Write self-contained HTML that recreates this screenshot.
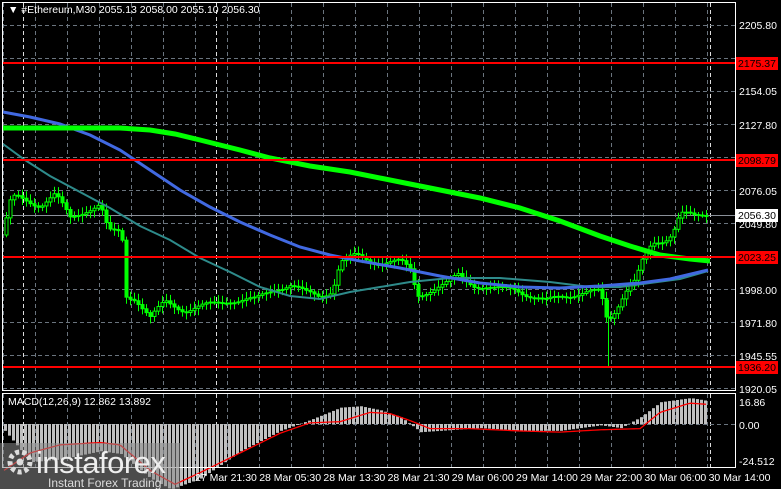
<!DOCTYPE html><html><head><style>
body{margin:0;background:#000;width:781px;height:489px;overflow:hidden;font-family:"Liberation Sans",sans-serif}
svg{position:absolute;left:0;top:0}
</style></head><body>
<svg id="s" width="781" height="489" xmlns="http://www.w3.org/2000/svg" font-family="Liberation Sans, sans-serif" font-size="10">
<rect width="781" height="489" fill="#000"/>
<g id="grid"></g>
<g id="cand"></g>
<g id="macd"></g>
<polyline fill="none" stroke="#2e8b8b" stroke-width="2" points="3,144 25,160 50,176 80,192 110,208 140,226 170,240 200,258 230,272 260,287 290,296 320,299 350,292 380,287 410,282 450,278 500,278 550,282 590,287 620,287 650,283 680,279 708,271"/>
<polyline fill="none" stroke="#4169e1" stroke-width="3" points="3,112 30,117 60,124 90,135 120,150 150,170 180,190 210,207 240,222 270,235 300,247 330,255 360,261 400,268 440,276 480,283 520,287 560,288 600,286 640,283 670,279 708,270"/>
<polyline fill="none" stroke="#00ff00" stroke-width="5" points="3,128 60,128 120,128 150,130 175,134 200,140 240,150 270,158 310,166 350,172 400,182 440,190 480,198 520,208 560,221 600,236 630,246 660,255 690,259 710,261"/>
<g id="reds"></g>
<rect x="2.5" y="2.5" width="733" height="388" fill="none" stroke="#fff"/>
<rect x="2.5" y="393.5" width="733" height="74" fill="none" stroke="#fff"/>
<text x="8" y="13" fill="#fff" font-size="10.5">▼ #Ethereum,M30  2055.13 2058.00 2055.10 2056.30</text>
<text x="8" y="405" fill="#fff" font-size="10.5">MACD(12,26,9) 12.862 13.892</text>
<g id="lbl" fill="#fff" font-size="10.5"></g>
<rect x="0" y="443" width="180" height="46" fill="#888" opacity="0.55"/>
<circle cx="20" cy="462" r="10" fill="none" stroke="#ddd" stroke-width="5" stroke-dasharray="4 3"/>
<circle cx="20" cy="462" r="3.5" fill="#ddd"/>
<text x="36" y="473" fill="#eee" font-size="31" letter-spacing="-0.5">instaforex</text>
<text x="48" y="487" fill="#ddd" font-size="12">Instant Forex Trading</text>
</svg>
<script>
const NS="http://www.w3.org/2000/svg";
function el(p,t,a,txt){const e=document.createElementNS(NS,t);for(const k in a)e.setAttribute(k,a[k]);if(txt)e.textContent=txt;document.getElementById(p).appendChild(e);return e;}
for(let x=3;x<735;x+=32){el('grid','line',{x1:x+.5,y1:3,x2:x+.5,y2:390,stroke:'#6a747e','stroke-dasharray':'4 3'});el('grid','line',{x1:x+.5,y1:394,x2:x+.5,y2:467,stroke:'#6a747e','stroke-dasharray':'4 3'});}
[23,216,710].forEach(x=>{el('grid','line',{x1:x+.5,y1:3,x2:x+.5,y2:390,stroke:'#ddd','stroke-dasharray':'4 3'});el('grid','line',{x1:x+.5,y1:394,x2:x+.5,y2:467,stroke:'#ddd','stroke-dasharray':'4 3'});});
for(let y=25;y<391;y+=33){el('grid','line',{x1:3,y1:y+.5,x2:735,y2:y+.5,stroke:'#6a747e','stroke-dasharray':'4 3'});}
el('grid','line',{x1:3,y1:424.5,x2:735,y2:424.5,stroke:'#6a747e','stroke-dasharray':'4 3'});
el('grid','line',{x1:3,y1:215.5,x2:735,y2:215.5,stroke:'#8a9099'});
const P=[[4,235],[8,205],[15,197],[25,200],[40,205],[55,195],[70,218],[85,210],[100,205],[108,232],[118,232],[122,240],[124,295],[135,298],[150,318],[165,302],[185,310],[205,306],[230,300],[255,300],[275,288],[290,285],[305,293],[320,296],[332,290],[340,262],[355,256],[375,262],[400,262],[410,270],[417,295],[430,290],[445,285],[458,275],[475,285],[495,290],[515,288],[530,296],[545,302],[560,296],[580,293],[600,292],[607,322],[615,310],[625,290],[635,280],[642,262],[652,245],[664,240],[672,232],[680,212],[686,214],[695,218],[706,216]];
function f(x){for(let i=1;i<P.length;i++){if(x<=P[i][0]){const a=P[i-1],b=P[i];return a[1]+(b[1]-a[1])*(x-a[0])/(b[0]-a[0]);}}return P[P.length-1][1];}
let prev=f(4);
for(let x=6;x<=706;x+=4){let c=f(x)+Math.sin(x*1.7)*3;let o=prev;let hi=Math.min(o,c)-2-Math.abs(Math.sin(x*0.9))*5,lo=Math.max(o,c)+2+Math.abs(Math.cos(x*1.3))*5;
el('cand','line',{x1:x+.5,y1:hi,x2:x+.5,y2:lo,stroke:'#00ff00'});
const up=c<o;el('cand','rect',{x:x-1,y:Math.min(o,c),width:3,height:Math.max(1,Math.abs(o-c)),fill:up?'#000':'#00ff00',stroke:'#00ff00','stroke-width':1});prev=c;}
el('cand','line',{x1:608.5,y1:300,x2:608.5,y2:366,stroke:'#00ff00'});
[[63,'2175.37'],[160,'2098.79'],[257,'2023.25'],[367,'1936.20']].forEach(([y,t])=>{el('reds','line',{x1:3,y1:y,x2:736,y2:y,stroke:'#ff0000','stroke-width':2});el('reds','rect',{x:736,y:y-6,width:42,height:13,fill:'#ff0000'});el('reds','text',{x:738,y:y+4,fill:'#000','font-size':10.5},t);});
[[25,'2205.80'],[91,'2154.05'],[125,'2127.80'],[191,'2076.05'],[224,'2049.80'],[290,'1998.00'],[323,'1971.80'],[356,'1945.55'],[389,'1920.05'],[402,'16.86'],[425,'0.00'],[461,'-24.512']].forEach(([y,t])=>el('lbl','text',{x:739,y:y+4},t));
el('lbl','rect',{x:736,y:209,width:42,height:13,fill:'#fff'});el('lbl','text',{x:738,y:219,fill:'#000'},'2056.30');
['27 Mar 21:30','28 Mar 05:30','28 Mar 13:30','28 Mar 21:30','29 Mar 06:00','29 Mar 14:00','29 Mar 22:00','30 Mar 06:00','30 Mar 14:00'].forEach((t,i)=>el('lbl','text',{x:195+i*64.2,y:481},t));
const M=[[4,-5],[30,-28],[60,-26],[100,-20],[120,-22],[150,-40],[170,-48],[200,-40],[240,-20],[280,-5],[310,3],[340,12],[360,13],[380,10],[400,5],[420,-6],[440,-5],[480,-3],[520,-5],[560,-5],[600,-1],[620,-3],[640,5],[660,16],[690,19],[706,17]];
const S=[[4,-40],[30,-25],[60,-18],[100,-16],[120,-18],[150,-40],[175,-52],[200,-42],[240,-25],[280,-8],[310,1],[340,2],[370,10],[390,9],[410,3],[430,-4],[470,-4],[520,-6],[560,-7],[600,-5],[640,-4],[660,10],[690,18],[706,17]];
function g(A,x){for(let i=1;i<A.length;i++){if(x<=A[i][0]){const a=A[i-1],b=A[i];return a[1]+(b[1]-a[1])*(x-a[0])/(b[0]-a[0]);}}return A[A.length-1][1];}
const k=23/16.86, z=424;
for(let x=4;x<=706;x+=4){const v=g(M,x);el('macd','rect',{x:x,y:v>0?z-v*k:z,width:3,height:Math.abs(v*k),fill:'#c0c0c0'});}
let pts=[];for(let x=4;x<=706;x+=3)pts.push(x+','+(z-g(S,x)*k*0.85));
el('macd','polyline',{points:pts.join(' '),fill:'none',stroke:'#ff0000','stroke-width':1.3});
</script>
</body></html>
